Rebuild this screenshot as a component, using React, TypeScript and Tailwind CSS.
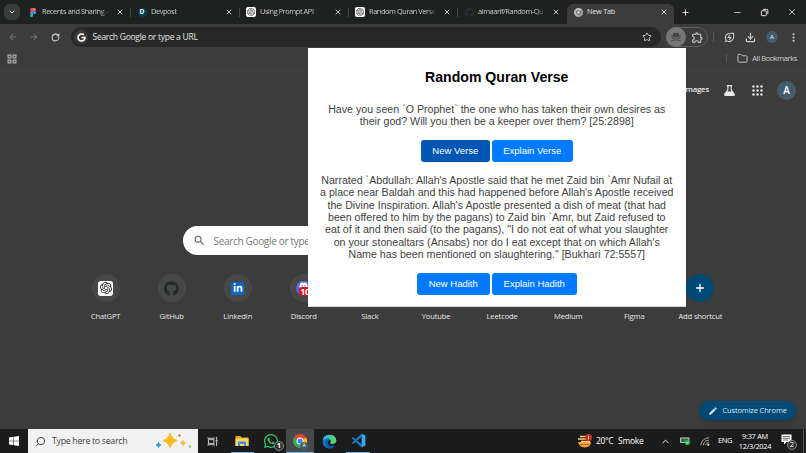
import React from "react";
import { FaGithub, FaGoogle, FaLinkedinIn, FaWhatsapp, FaDiscord } from "react-icons/fa";
import { SiOpenai } from "react-icons/si";
import { MdOutlineExtension, MdSearch } from "react-icons/md";
import {
  ArrowLeft,
  ArrowRight,
  ChevronDown,
  ChevronUp,
  Download,
  EllipsisVertical,
  Folder,
  Minus,
  Plus,
  RotateCw,
  Search,
  Star,
  X,
} from "lucide-react";

function FigmaIcon() {
  return (
    <svg viewBox="0 0 20 30" className="h-[9px] w-[6px]">
      <path d="M10 0H5a5 5 0 0 0 0 10h5z" fill="#f24e1e" />
      <path d="M10 0h5a5 5 0 0 1 0 10h-5z" fill="#ff7262" />
      <path d="M10 10H5a5 5 0 0 0 0 10h5z" fill="#a259ff" />
      <circle cx="15" cy="15" r="5" fill="#1abcfe" />
      <path d="M10 20H5a5 5 0 1 0 5 5z" fill="#0acf83" />
    </svg>
  );
}

function OpenAiIcon({ big }: { big?: boolean }) {
  return (
    <span
      className={
        big
          ? "flex size-[15px] items-center justify-center rounded-[3px] bg-white text-[12px] text-[#222]"
          : "flex size-[10px] items-center justify-center rounded-[2px] bg-white text-[8px] text-[#333]"
      }
    >
      <SiOpenai />
    </span>
  );
}

function ChromeIcon({ color, className }: { color?: boolean; className: string }) {
  return (
    <svg viewBox="0 0 24 24" className={className}>
      <path d="M12 12 1.6 6A12 12 0 0 1 22.4 6z" fill={color ? "#ea4335" : "#c4c7c5"} />
      <path d="M12 12 22.4 6A12 12 0 0 1 12 24z" fill={color ? "#fbbc04" : "#a2a4a3"} />
      <path d="M12 12v12A12 12 0 0 1 1.6 6z" fill={color ? "#34a853" : "#b9bbba"} />
      <circle cx="12" cy="12" r="6" fill={color ? "#fff" : "#3c3c3c"} />
      <circle cx="12" cy="12" r="4.4" fill={color ? "#4285f4" : "#c4c7c5"} />
    </svg>
  );
}

const tabs = [
  { title: "Recents and Sharing -", icon: <FigmaIcon /> },
  {
    title: "Devpost",
    icon: (
      <span className="flex h-[9px] w-[9px] items-center justify-center rounded-full bg-[#003e54] text-[6.5px] font-bold text-white">
        D
      </span>
    ),
  },
  { title: "Using Prompt API", icon: <OpenAiIcon /> },
  { title: "Random Quran Verse", icon: <OpenAiIcon /> },
  { title: "aimaarif/Random-Qu", icon: <FaGithub className="size-[9px] text-[#2b3038]" /> },
];

function TabStrip() {
  return (
    <div className="flex h-6 w-full bg-[#1f2120]">
      <div className="flex w-[22px] shrink-0 items-start pt-1 pl-1">
        <div className="flex size-4 items-center justify-center rounded-[5px] bg-[#3a3b3b]">
          <ChevronDown className="size-[8px] text-white" strokeWidth={3} />
        </div>
      </div>
      {tabs.map((tab, i) => (
        <div key={tab.title} className="flex w-[109px] shrink-0 items-center">
          <div className="flex w-5 shrink-0 items-center justify-center pl-[2px]">{tab.icon}</div>
          <div className="w-[68px] mask-r-from-85% text-[7.4px] tracking-[-0.42px] whitespace-nowrap text-[#c9cbca]">
            {tab.title}
          </div>
          <div className="flex w-[19px] justify-center">
            <X className="size-[8px] text-[#dedede]" strokeWidth={2.6} />
          </div>
          {i < tabs.length - 1 && <div className="ml-px h-[9px] w-px bg-[#454746]" />}
        </div>
      ))}
      <div className="mt-1 flex w-[107px] shrink-0 items-center rounded-t-[6px] bg-[#3c3c3c] pb-1">
        <div className="flex w-5 shrink-0 items-center justify-center pl-[2px]">
          <ChromeIcon className="size-[9px]" />
        </div>
        <div className="w-[67px] text-[7.4px] tracking-[-0.3px] text-[#e3e3e3]">New Tab</div>
        <div className="flex w-5 justify-center">
          <X className="size-[8px] text-[#e3e3e3]" strokeWidth={2.6} />
        </div>
      </div>
      <div className="flex flex-1 items-center text-[#e3e3e3]">
        <Plus className="ml-[7px] size-[9px]" strokeWidth={2.4} />
        <div className="flex-1" />
        <Minus className="size-[9px]" />
        <svg viewBox="0 0 10 10" className="mx-[18px] size-[9px]" fill="none" stroke="currentColor" strokeWidth="1.1">
          <rect x="1.5" y="3" width="5.5" height="5.5" rx="0.8" />
          <path d="M3.5 1.5h4.2a1 1 0 0 1 1 1v4.2" />
        </svg>
        <X className="mr-[9px] size-[10px]" strokeWidth={2} />
      </div>
    </div>
  );
}

function Toolbar() {
  return (
    <div className="flex h-6 items-center bg-[#3c3c3c] pt-[2px]">
      <div className="flex w-[71px] items-center pl-2">
        <ArrowLeft className="size-[10px] text-[#777]" strokeWidth={2.4} />
        <ArrowRight className="ml-[11px] size-[10px] text-[#777]" strokeWidth={2.4} />
        <RotateCw className="ml-[12px] size-[9px] text-[#d0d0d0]" strokeWidth={2.8} />
      </div>
      <div className="flex h-5 w-[590px] items-center rounded-full bg-[#282828] pl-[3px]">
        <div className="flex size-[14px] items-center justify-center rounded-full bg-[#3a3a3a]">
          <FaGoogle className="size-[9px] text-white" />
        </div>
        <div className="ml-[4.5px] flex-1 text-[8.5px] tracking-[-0.27px] text-[#e3e3e3]">Search Google or type a URL</div>
        <Star className="mr-[9px] size-[10px] text-[#d0d0d0]" strokeWidth={2.2} />
      </div>
      <div className="ml-[5px] flex h-5 w-[42px] items-center rounded-full border border-[#5c5c5c]">
        <div className="-ml-px flex size-5 items-center justify-center rounded-full bg-[#777]">
          <svg viewBox="0 0 24 24" className="size-[12px] text-[#444]" fill="none" stroke="currentColor" strokeWidth="1.8">
            <path d="M6 10q0-6 3-6l3 1.500L15 4q3 0 3 6z" fill="currentColor" />
            <path d="M2 9q2 2 10 2t10-2M3 14h18M5 14l4 4h6l4-4M2 20l7-2M22 20l-7-2" />
          </svg>
        </div>
        <MdOutlineExtension className="ml-[5px] size-[13px] text-[#c7c7c7]" />
      </div>
      <div className="ml-[5px] h-[10px] w-px bg-[#5a5a5a]" />
      <div className="flex flex-1 items-center text-[#cfcfcf]">
        <svg viewBox="0 0 24 24" className="ml-[10px] size-[11px]" fill="none" stroke="currentColor" strokeWidth="2.2">
          <path d="M21 3q-18-2-18 9a8 8 0 0 0 2 6q3 3 7 3 11-1 9-18zM2 22l4-4" />
          <path d="M13 6l-4 6h6l-4 6" />
        </svg>
        <Download className="ml-[10px] size-[11px]" strokeWidth={2.5} />
        <div className="ml-[10px] flex size-3 items-center justify-center rounded-full bg-[#435c6b] text-[6px] text-white">
          A
        </div>
        <EllipsisVertical className="ml-[10px] size-[11px]" strokeWidth={2.6} />
      </div>
    </div>
  );
}

function BookmarksBar() {
  return (
    <div className="flex h-[23px] items-center justify-between border-b border-[#414141] bg-[#3c3c3c]">
      <svg viewBox="0 0 18 18" className="ml-[7px] size-[10px]" fill="none" stroke="#b8b8b8" strokeWidth="2">
        <rect x="2" y="2" width="5" height="5" />
        <rect x="11" y="2" width="5" height="5" />
        <rect x="2" y="11" width="5" height="5" />
        <rect x="11" y="11" width="5" height="5" />
      </svg>
      <div className="flex items-center pr-[9px]">
        <div className="h-[9px] w-px bg-[#5a5a5a]" />
        <Folder className="ml-[10px] size-[11px] text-[#c7c7c7]" strokeWidth={2} />
        <span className="ml-[4px] text-[7.4px] tracking-[-0.35px] text-[#d0d0d0]">All Bookmarks</span>
      </div>
    </div>
  );
}

const shortcuts = [
  { name: "ChatGPT", icon: <OpenAiIcon big /> },
  { name: "GitHub", icon: <FaGithub className="size-[15px] text-[#24292e]" /> },
  {
    name: "Linkedin",
    icon: (
      <span className="flex size-[13px] items-center justify-center rounded-[1px] bg-[#0a66c2]">
        <FaLinkedinIn className="size-[10px] text-white" />
      </span>
    ),
  },
  {
    name: "Discord",
    icon: (
      <span className="relative flex size-[15px] items-center justify-center rounded-full bg-[#5865f2] text-white">
        <FaDiscord className="mb-[5px] size-[9px]" />
        <span className="absolute bottom-0 left-[3px] rounded-[3px] bg-[#d8141c] px-[1px] text-[9px] leading-[9px] font-bold tracking-[-0.5px]">
          10
        </span>
      </span>
    ),
  },
  { name: "Slack" },
  { name: "Youtube" },
  { name: "Leetcode" },
  { name: "Medium" },
  { name: "Figma" },
];

function NewTabPage() {
  return (
    <div className="flex h-[358px] flex-col bg-[#3c3c3c]">
      <div className="flex h-[38px] shrink-0 items-center justify-end pr-[10px] text-[#e8e8e8]">
        <span className="text-[7.8px] font-semibold tracking-[-0.2px]">Images</span>
        <svg viewBox="0 0 24 24" className="ml-[14px] size-[13px]" fill="currentColor">
          <path d="M7 2h10v2h-1v6l6 9q1 3-2 3H4q-3 0-2-3l6-9V4H7zM10 4v7l-2 3h8l-2-3V4z" fillRule="evenodd" />
        </svg>
        <svg viewBox="0 0 11 11" className="ml-[16px] size-[11px]" fill="currentColor">
          {[1.5, 5.5, 9.5].map((y) =>
            [1.5, 5.5, 9.5].map((x) => <circle key={`${x}-${y}`} cx={x} cy={y} r="1.2" />)
          )}
        </svg>
        <div className="ml-[14px] flex size-[19px] items-center justify-center rounded-full bg-[#435c6b] text-[10px] font-semibold text-white">
          A
        </div>
      </div>
      <div className="mt-[117px] ml-[183px] flex h-[29px] w-[440px] shrink-0 items-center rounded-full bg-white">
        <MdSearch className="ml-[10px] size-[13px] text-[#5c5f62]" />
        <span className="ml-[7.5px] pt-[1px] text-[10px] tracking-[-0.32px] text-[#757575]">Search Google or type a URL</span>
      </div>
      <div className="mt-[19px] ml-[72.5px] flex">
        {shortcuts.map((item) => (
          <div key={item.name} className="flex w-[66.1px] flex-col items-center">
            <div className="flex size-7 items-center justify-center rounded-full bg-[#464847]">{item.icon}</div>
            <span className="mt-[9px] text-[7.6px] leading-[11px] tracking-[-0.15px] text-[#e6e6e6]">{item.name}</span>
          </div>
        ))}
        <div className="flex w-[66.1px] flex-col items-center">
          <div className="flex size-7 items-center justify-center rounded-full bg-[#004a77]">
            <Plus className="size-[12px] text-white" strokeWidth={2.6} />
          </div>
          <span className="mt-[9px] text-[7.6px] leading-[11px] tracking-[-0.15px] whitespace-nowrap text-[#e6e6e6]">
            Add shortcut
          </span>
        </div>
      </div>
      <div className="mt-auto mr-[10px] mb-[9px] flex h-[19px] w-[97px] items-center self-end rounded-full bg-[#004a77] text-white shadow-md">
        <svg viewBox="0 0 24 24" className="ml-[9px] size-[10px]" fill="#d7e8f7">
          <path d="M3 17.3V21h3.7L17.8 9.9l-3.7-3.7zM20.7 7a1 1 0 0 0 0-1.4l-2.3-2.3a1 1 0 0 0-1.4 0l-1.8 1.8 3.7 3.7z" />
        </svg>
        <span className="ml-[4.5px] text-[7.5px] font-medium tracking-[-0.15px] whitespace-nowrap text-[#d7e8f7]">
          Customize Chrome
        </span>
      </div>
    </div>
  );
}

function VersePopup() {
  return (
    <div className="absolute top-12 left-[308px] flex h-[259px] w-[377.5px] flex-col items-center border-b border-[#d8d8d8] bg-white text-center font-['Liberation_Sans',sans-serif] text-[#3f3f3f]">
      <h1 className="mt-[21px] text-[14.1px] leading-4 font-bold text-black">Random Quran Verse</h1>
      <p className="mt-[18px] text-[10.65px] leading-[12.4px] whitespace-nowrap">
        Have you seen ˊO Prophetˋ the one who has taken their own desires as
        <br />
        their god? Will you then be a keeper over them? [25:2898]
      </p>
      <div className="mt-[12px] flex gap-[2px] text-[9.5px] text-white">
        <button className="h-[22px] w-[69px] rounded-[3px] bg-[#0056b3]">New Verse</button>
        <button className="h-[22px] w-[81px] rounded-[3px] bg-[#007bff]">Explain Verse</button>
      </div>
      <p className="mt-[12px] text-[10.65px] leading-[12.4px] whitespace-nowrap">
        Narrated `Abdullah: Allah's Apostle said that he met Zaid bin `Amr Nufail at
        <br />
        a place near Baldah and this had happened before Allah's Apostle received
        <br />
        the Divine Inspiration. Allah's Apostle presented a dish of meat (that had
        <br />
        been offered to him by the pagans) to Zaid bin `Amr, but Zaid refused to
        <br />
        eat of it and then said (to the pagans), "I do not eat of what you slaughter
        <br />
        on your stonealtars (Ansabs) nor do I eat except that on which Allah's
        <br />
        Name has been mentioned on slaughtering." [Bukhari 72:5557]
      </p>
      <div className="mt-[12px] flex gap-[2px] text-[9.5px] text-white">
        <button className="h-[22px] w-[73px] rounded-[3px] bg-[#007bff]">New Hadith</button>
        <button className="h-[22px] w-[85px] rounded-[3px] bg-[#007bff]">Explain Hadith</button>
      </div>
    </div>
  );
}

function Sparkles() {
  return (
    <svg viewBox="0 0 38 16" className="h-4 w-[38px]">
      <path d="M15 0q1.500 6 7 7.500-5.500 1.500-7 7-1.500-5.500-7-7 5.500-1.500 7-7.500z" fill="#fbbc1c" stroke="#fbbc1c" strokeLinejoin="round" />
      <path d="M28 7q.6 2.500 3 3-2.400.6-3 3-.6-2.400-3-3 2.400-.5 3-3z" fill="#f8b64c" stroke="#f8b64c" strokeWidth="0.500" />
      <path d="M3.500 9.500q.5 2 2.500 2.500-2 .5-2.500 2.500-.5-2-2.500-2.500 2-.5 2.500-2.500z" fill="#2596e0" stroke="#2596e0" strokeWidth="0.800" />
      <circle cx="24.500" cy="2.500" r="1.200" fill="#e8743b" />
      <circle cx="35" cy="13.500" r="1.200" fill="#8cc474" />
    </svg>
  );
}

function Taskbar() {
  return (
    <div className="flex h-6 items-center bg-[#1c1c1c] text-white">
      <div className="flex w-7 justify-center">
        <svg viewBox="0 0 10 10" className="size-[10px]" fill="#fff">
          <path d="M0 1.400 4.500.8v3.900H0zM5 .7 10 0v4.700H5zM0 5.200h4.500v3.900L0 8.500zM5 5.200h5v4.700l-5-.7z" />
        </svg>
      </div>
      <div className="flex h-6 w-[170px] items-center bg-[#f2f2f2]">
        <Search className="ml-[7px] size-[11px] -scale-x-100 text-[#333]" strokeWidth={2} />
        <span className="ml-[6px] flex-1 pt-px text-[8.8px] tracking-[-0.3px] text-[#444]">Type here to search</span>
        <Sparkles />
        <div className="w-[5px]" />
      </div>
      <div className="flex w-7 justify-center">
        <svg viewBox="0 0 12 12" className="size-[11px]" fill="none" stroke="#d8d8d8" strokeWidth="1">
          <rect x="1.500" y="4" width="6" height="4" />
          <path d="M1 1.500v1h7v-1M1 10.500v-1h7v1M10.500 1v3M10.500 6v5" />
          <path d="M10.500 4v2" strokeWidth="2" />
        </svg>
      </div>
      <div className="flex h-6 w-8 justify-center">
        <div className="flex h-6 w-[23px] items-center justify-center border-b border-[#76b9ed]">
          <svg viewBox="0 0 14 12" className="h-3 w-[14px]">
            <path d="M.5 1h5l1 1.500h7V11H.5z" fill="#e8a51f" />
            <path d="M.5 3.500h13V11H.5z" fill="#fcd462" />
            <path d="M3 11V7.500q0-1 1-1h6q1 0 1 1V11H9V9H5v2z" fill="#3b8fd8" />
          </svg>
        </div>
      </div>
      <div className="relative flex w-7 items-center justify-center pr-[2px]">
        <FaWhatsapp className="size-[16px] text-[#2ad366]" />
        <span className="absolute right-[2px] bottom-[-2px] flex size-[10px] items-center justify-center rounded-full border border-[#888] bg-[#333] text-[7.5px] leading-none font-bold">
          1
        </span>
      </div>
      <div className="relative flex h-6 w-7 items-center justify-center border-b border-[#76b9ed] bg-[#484848]">
        <ChromeIcon color className="size-[14px]" />
        <span className="absolute right-[6px] bottom-[2px] flex size-[8px] items-center justify-center rounded-full bg-[#435c6b] text-[5px]">
          A
        </span>
      </div>
      <div className="flex w-[30px] justify-center">
        <svg viewBox="0 0 24 24" className="size-[15px]">
          <defs>
            <linearGradient id="edgeTop" x1="0" x2="1">
              <stop offset="0" stopColor="#2bb0ee" />
              <stop offset="1" stopColor="#5ddc5b" />
            </linearGradient>
          </defs>
          <path d="M1 11Q2 1 12 1t11 9q0 6-7 6-3 0-3-2 1-1 1-3-1-4-5-4-5 0-8 4z" fill="url(#edgeTop)" />
          <path d="M1 11q3-4 8-4 3 0 4 2-4 1-4 5 1 6 7 6 3 0 5-2-3 5-9 5Q1 22 1 11z" fill="#1677d2" />
          <path d="M9 14q-1-4 3-5-6-1-7 5 0 7 8 9 5 0 8-5-10 4-12-4z" fill="#0c59a4" />
        </svg>
      </div>
      <div className="ml-[2px] flex h-6 w-6 items-center justify-center border-b border-[#76b9ed]">
        <svg viewBox="0 0 24 24" className="size-[15px]">
          <path d="M17 1 3 14.500 1 16l2 1.500L17 6z" fill="#1583cf" />
          <path d="M17 23 3 9.500 1 8l2-1.500L17 18z" fill="#0f7fcb" />
          <path d="M17 1l6 3v16l-6 3z" fill="#35a9f0" />
        </svg>
      </div>
      <div className="flex-1" />
      <svg viewBox="0 0 16 14" className="mr-[-1px] h-[14px] w-4">
        <path d="M1 8h13q0 5-6.500 5.500Q2 13 1 8z" fill="#f0a43a" />
        <path d="M3 2.500h7M1 5h10M4 7.500h9" stroke="#f8cf6a" strokeWidth="1.500" />
        <path d="M3 10.500h9" stroke="#c46a21" strokeWidth="1" />
        <circle cx="11.500" cy="3.500" r="3.500" fill="#d42b20" />
        <path d="M11.500 1.800v3.500" stroke="#fff" strokeWidth="0.900" />
      </svg>
      <span className="ml-[4px] w-[22px] text-[8.5px] tracking-[-0.35px] whitespace-nowrap">20°C</span>
      <span className="w-[42px] text-[8.4px] tracking-[-0.2px]">Smoke</span>
      <ChevronUp className="size-[11px]" strokeWidth={2} />
      <svg viewBox="0 0 12 10" className="ml-[9px] h-[10px] w-[11px]">
        <rect x="0.700" y="1.700" width="9" height="4.800" fill="#2d6b3c" stroke="#ddd" />
        <circle cx="8" cy="6.500" r="2.800" fill="#27ae4f" />
        <path d="m6.600 6.500 1 1 1.800-2" stroke="#fff" fill="none" strokeWidth="0.800" />
      </svg>
      <svg viewBox="0 0 12 12" className="ml-[9px] size-[10px]" fill="none" stroke="#bbb" strokeWidth="1">
        <path d="M1 11A10 10 0 0 1 11 2M4 11a7 7 0 0 1 7-6M6.500 11A4.500 4.500 0 0 1 11 8" />
        <circle cx="10" cy="10.500" r="1" fill="#fff" />
      </svg>
      <span className="ml-[8px] w-[21px] text-[7.5px] tracking-[-0.35px]">ENG</span>
      <div className="flex w-[32px] flex-col items-center text-[7.4px] leading-[10.5px] tracking-[-0.3px] whitespace-nowrap">
        <span>9:37 AM</span>
        <span>12/3/2024</span>
      </div>
      <div className="relative ml-[10px] size-[14px]">
        <svg viewBox="0 0 12 12" className="size-[12px]">
          <path d="M.5.500h10v7.500h-5L3 10.500V8H.5z" fill="#fff" />
          <path d="M2 2.500h7M2 4.300h7M2 6h5" stroke="#333" strokeWidth="0.700" />
        </svg>
        <span className="absolute right-[-2px] bottom-[-2px] flex size-[10px] items-center justify-center rounded-full border border-[#888] bg-[#333] text-[7.5px] leading-none">
          2
        </span>
      </div>
      <div className="ml-[8px] h-6 w-[3px] border-l border-[#555]" />
    </div>
  );
}

export default function App() {
  return (
    <div className="relative flex h-[453px] w-[806px] flex-col overflow-hidden bg-[#3c3c3c] font-['Open_Sans','Noto_Sans',sans-serif]">
      <TabStrip />
      <Toolbar />
      <BookmarksBar />
      <NewTabPage />
      <VersePopup />
      <Taskbar />
    </div>
  );
}
